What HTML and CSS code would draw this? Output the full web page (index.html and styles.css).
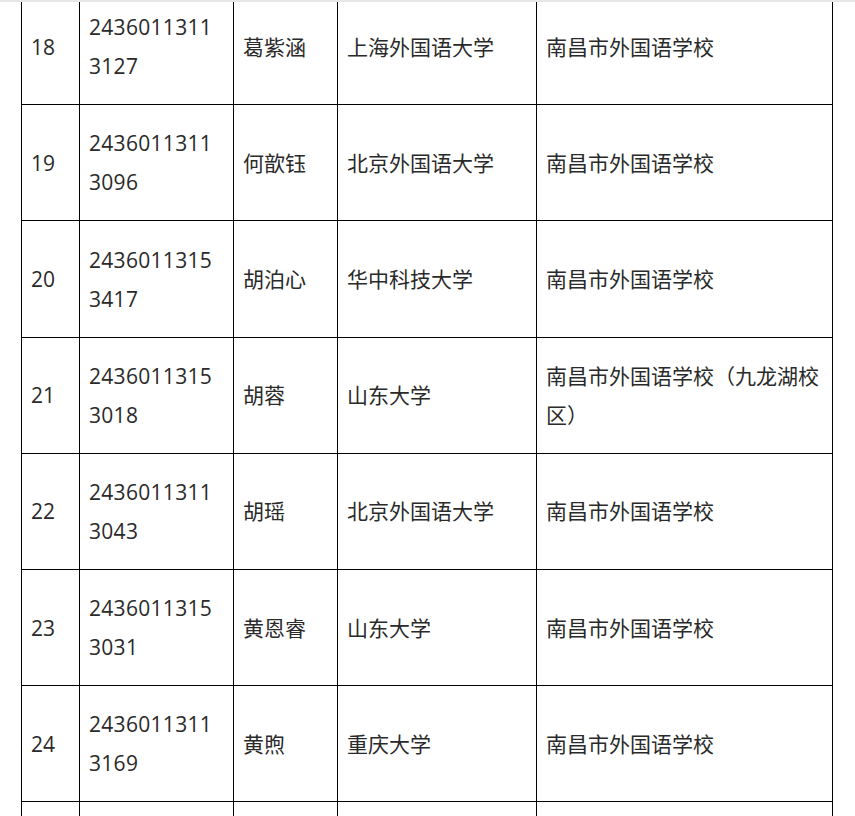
FILE: index.html
```html
<!DOCTYPE html>
<html lang="zh-CN">
<head>
<meta charset="utf-8">
<title>录取名单</title>
<link rel="stylesheet" href="styles.css">
</head>
<body>
<div class="topbar"></div>
<div class="viewport">
<table class="list">
<colgroup>
<col class="c-no"><col class="c-id"><col class="c-name"><col class="c-uni"><col class="c-school">
</colgroup>
<tbody>
<tr><td>18</td><td class="num">24360113113127</td><td>葛紫涵</td><td>上海外国语大学</td><td>南昌市外国语学校</td></tr>
<tr><td>19</td><td class="num">24360113113096</td><td>何歆钰</td><td>北京外国语大学</td><td>南昌市外国语学校</td></tr>
<tr><td>20</td><td class="num">24360113153417</td><td>胡泊心</td><td>华中科技大学</td><td>南昌市外国语学校</td></tr>
<tr><td>21</td><td class="num">24360113153018</td><td>胡蓉</td><td>山东大学</td><td>南昌市外国语学校（九龙湖校区）</td></tr>
<tr><td>22</td><td class="num">24360113113043</td><td>胡瑶</td><td>北京外国语大学</td><td>南昌市外国语学校</td></tr>
<tr><td>23</td><td class="num">24360113153031</td><td>黄恩睿</td><td>山东大学</td><td>南昌市外国语学校</td></tr>
<tr><td>24</td><td class="num">24360113113169</td><td>黄煦</td><td>重庆大学</td><td>南昌市外国语学校</td></tr>
<tr><td>&nbsp;</td><td class="num">&nbsp;</td><td>&nbsp;</td><td>&nbsp;</td><td>&nbsp;</td></tr>
</tbody>
</table>
</div>
</body>
</html>
```

FILE: styles.css
```css
html, body {
  margin: 0;
  padding: 0;
  background: #ffffff;
}
body {
  font-family: "Open Sans", "Noto Sans CJK SC", sans-serif;
  font-size: 21px;
  color: #2a2a2a;
}
.topbar {
  position: fixed;
  top: 0;
  left: 0;
  right: 0;
  height: 2px;
  background: #e6e6e6;
  z-index: 2;
}
.viewport {
  height: 816px;
  overflow: hidden;
}
.list {
  margin: -11px 0 0 21px;
  width: 812px;
  table-layout: fixed;
  border-collapse: separate;
  border-spacing: 0;
  border-left: 1px solid #000;
}
.c-no { width: 58px; }
.c-id { width: 154px; }
.c-name { width: 104px; }
.c-uni { width: 199px; }
.c-school { width: 296px; }
.list td {
  border-right: 1px solid #000;
  border-bottom: 1px solid #000;
  padding: 19.2px 10px 18px 9px;
  line-height: 39px;
  height: 78px;
  vertical-align: middle;
  text-align: left;
  word-break: break-all;
}
.list td.num {
  letter-spacing: 0.3px;
}
```
